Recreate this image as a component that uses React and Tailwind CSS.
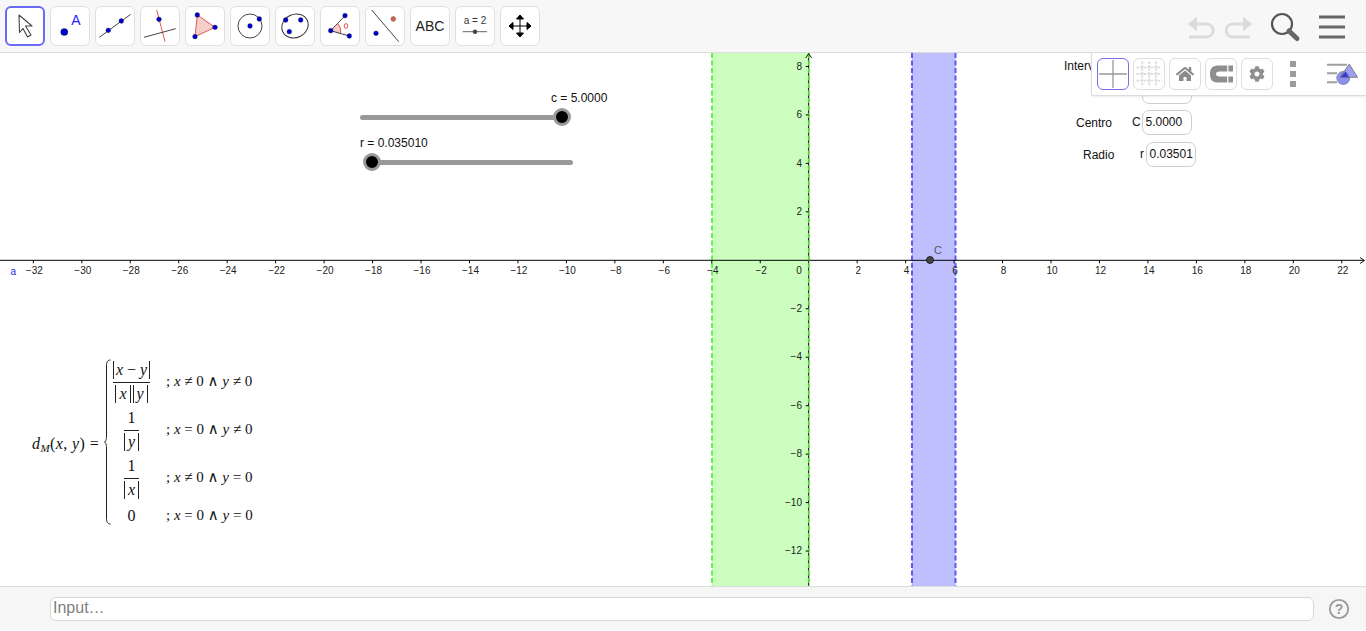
import React from "react";
import { FaHome, FaCog } from "react-icons/fa";

const BLUE = "#0000cc";
const Pt = ({ x, y, r = 2.4, c = BLUE }) => <circle cx={x} cy={y} r={r} fill={c} stroke="#222" strokeWidth="0.3" />;
const L = ({ a, b, c = "#444", w = 1 }) => <line x1={a[0]} y1={a[1]} x2={b[0]} y2={b[1]} stroke={c} strokeWidth={w} />;

const toolIcons = [
  <path key="0" d="M14 9 L27 20 L20.5 20 L26 29 L22.5 31 L18 22.5 L14.5 26.5 Z" fill="#fff" stroke="#444" strokeWidth="1.1" strokeLinejoin="round" />,
  <g key="1">
    <circle cx="14.3" cy="26" r="3.6" fill={BLUE} stroke="#111" strokeWidth="0.3" />
    <text x="26" y="19" textAnchor="middle" fontSize="14" fill="#2222ff">A</text>
  </g>,
  <g key="2"><L a={[4.3, 31.3]} b={[35.7, 8.3]} /><Pt x={13.3} y={24.3} /><Pt x={26.3} y={15} /></g>,
  <g key="3"><L a={[16.7, 4]} b={[25, 35.7]} c="#e8574f" /><L a={[4, 31.3]} b={[35.7, 22.7]} /><Pt x={19} y={13.3} /></g>,
  <g key="4">
    <polygon points="12.3,9 30,21.3 10,30.7" fill="#f5cfca" stroke="#dd5a50" strokeWidth="1" />
    <Pt x={12.3} y={9} /><Pt x={30} y={21.3} /><Pt x={10} y={30.7} />
  </g>,
  <g key="5"><circle cx="20" cy="20" r="12" fill="none" stroke="#444" strokeWidth="1" /><Pt x={20} y={20} /><Pt x={29.3} y={13} /></g>,
  <g key="6">
    <ellipse cx="20" cy="20" rx="13.5" ry="11.5" transform="rotate(-25 20 20)" fill="none" stroke="#333" strokeWidth="1" />
    <Pt x={10.7} y={14} /><Pt x={25.7} y={14} /><Pt x={14.3} y={25.7} />
  </g>,
  <g key="7">
    <path d="M10.7 24.7 L17.5 17.3 A11 11 0 0 1 20.5 27.7 Z" fill="#f5cfca" stroke="none" />
    <path d="M17.5 17.3 A11 11 0 0 1 20.5 27.7" fill="none" stroke="#dd5a50" strokeWidth="1" />
    <L a={[10.7, 24.7]} b={[25, 9.7]} /><L a={[10.7, 24.7]} b={[29.3, 30]} />
    <ellipse cx="26" cy="20" rx="1.8" ry="2.4" fill="none" stroke="#dd5a50" strokeWidth="1" />
    <Pt x={10.7} y={24.7} /><Pt x={25} y={9.7} /><Pt x={29.3} y={30} />
  </g>,
  <g key="8"><L a={[6.7, 4]} b={[33.7, 35.7]} /><Pt x={28.3} y={13} c="#d9604f" /><Pt x={11} y={27.3} /></g>,
  <text key="9" x="20" y="25" textAnchor="middle" fontSize="14" fill="#222">ABC</text>,
  <g key="10">
    <text x="20" y="18" textAnchor="middle" fontSize="10" fill="#333">a = 2</text>
    <L a={[7.7, 25.7]} b={[32, 25.7]} c="#666" w="1" />
    <circle cx="20" cy="25.7" r="2.2" fill="#444" />
  </g>,
  <g key="11" stroke="#000" fill="#000">
    <L a={[11, 20]} b={[29, 20]} c="#000" w="1" /><L a={[20, 11]} b={[20, 29]} c="#000" w="1" />
    <polygon points="20,9 16.5,13 23.5,13" /><polygon points="20,31 16.5,27 23.5,27" />
    <polygon points="9,20 13,16.5 13,23.5" /><polygon points="31,20 27,16.5 27,23.5" />
  </g>,
];

const xTicks = [];
for (let v = -32; v <= 22; v += 2) xTicks.push(v);
const yTicks = [];
for (let v = 8; v >= -12; v -= 2) if (v !== 0) yTicks.push(v);
const X0 = 808.7, Y0 = 260.3, U = 24.23;
const fmt = (v) => (v < 0 ? "\u2212" + -v : "" + v);

const Graph = () => (
  <svg className="absolute inset-0" width="1366" height="533" viewBox="0 53 1366 533">
    <rect x="712" y="53" width="96.7" height="533" fill="#ccffbf" />
    <rect x="912" y="53" width="43.5" height="533" fill="#bfbfff" />
    <line x1="712" y1="53" x2="712" y2="586" stroke="#66ee55" strokeWidth="2" strokeDasharray="5 2.5" />
    <line x1="912" y1="53" x2="912" y2="586" stroke="#5a5af5" strokeWidth="2" strokeDasharray="5 2.5" />
    <line x1="955.5" y1="53" x2="955.5" y2="586" stroke="#5a5af5" strokeWidth="2" strokeDasharray="5 2.5" />
    <line x1="0" y1={Y0} x2="1364" y2={Y0} stroke="#000" strokeWidth="1" />
    <line x1={X0} y1="54" x2={X0} y2="586" stroke="#000" strokeWidth="1" />
    <line x1={X0} y1="53" x2={X0} y2="586" stroke="#44dd22" strokeWidth="1.6" strokeDasharray="5 2.5" />
    <path d="M1360 257.5 L1364.5 260.5 L1360 263.5 M805.7 58 L808.7 53.5 L811.7 58" fill="none" stroke="#000" strokeWidth="0.9" />
    {xTicks.map((v) => {
      const x = X0 + v * U;
      return (
        <g key={v}>
          {v !== 0 && <line x1={x} y1={Y0} x2={x} y2={Y0 + 3} stroke="#000" strokeWidth="1" />}
          <text x={v === 0 ? 799 : x + 1} y="274" textAnchor="middle" fontSize="10" fill="#222">{fmt(v)}</text>
        </g>
      );
    })}
    {yTicks.map((v) => {
      const y = Y0 - v * U;
      return (
        <g key={v}>
          <line x1={X0 - 3} y1={y} x2={X0} y2={y} stroke="#000" strokeWidth="1" />
          <text x="802" y={y + 3.2} textAnchor="end" fontSize="10" fill="#222">{fmt(v)}</text>
        </g>
      );
    })}
    <text x="10.5" y="275" fontSize="10" fill="#2222dd">a</text>
    <circle cx="930" cy="260" r="3.5" fill="#444" stroke="#111" strokeWidth="0.8" />
    <text x="934" y="254" fontSize="11" fill="#555">C</text>
  </svg>
);

const Slider = ({ left, top, width, knob, label, labelLeft, labelTop }) => (
  <>
    <div className="absolute text-[12px] leading-[14px] text-[#111]" style={{ left: labelLeft, top: labelTop }}>{label}</div>
    <div className="absolute h-[5px] rounded-full bg-[#999999]" style={{ left, top, width }} />
    <div
      className="absolute h-[18px] w-[18px] rounded-full bg-black border-[3px] border-[#999999]"
      style={{ left: knob - 9, top: top - 6.5 }}
    />
  </>
);

const Field = ({ left, top, value, label, labelLeft, name, nameLeft, height = 25 }) => (
  <>
    {label && <div className="absolute text-[12px] leading-[14px] text-[#111]" style={{ left: labelLeft, top: top + 6 }}>{label}</div>}
    {name && <div className="absolute text-[12px] leading-[14px] text-[#111]" style={{ left: nameLeft, top: top + 5 }}>{name}</div>}
    <div
      className="absolute w-[50px] rounded-[7px] border border-[#cfcfcf] bg-white pl-[2.5px] text-[12px] leading-[23px] text-[#111]"
      style={{ left, top, height }}
    >
      {value}
    </div>
  </>
);

const V = ({ children }) => <i>{children}</i>;
const And = () => <span className="font-['DejaVu_Sans',sans-serif] text-[15px] font-normal leading-none">∧</span>;
const Bar = ({ children, gap = "" }) => (
  <span className={"inline-block h-[18px] border-x border-[#222] px-[1.5px] align-middle leading-[18px] " + gap}>{children}</span>
);
const Frac = ({ top, bottom }) => (
  <div className="flex flex-col items-center">
    <div className="flex h-[23px] items-center">{top}</div>
    <div className="flex h-[24px] min-w-[15px] items-center justify-center self-stretch border-t border-[#222]">{bottom}</div>
  </div>
);
const Row = ({ h, left, right }) => (
  <div className="flex items-center" style={{ height: h }}>
    <div className="flex w-[39px] justify-center">{left}</div>
    <div className="mb-[2px] ml-[15px] whitespace-nowrap text-[15px]">{right}</div>
  </div>
);

const Formula = () => (
  <div className="absolute left-[32px] top-[305px] flex h-[172px] items-center font-['Liberation_Serif',serif] text-[16px] text-[#111]">
    <div className="w-[72px] whitespace-nowrap tracking-[0.4px]">
      <V>d</V><sub className="text-[11px]"><V>M</V></sub>(<V>x</V>, <V>y</V>) =
    </div>
    <svg className="mr-[1px] mt-[1px] shrink-0 self-start" width="7" height="166" viewBox="0 0 7 166">
      <path d="M6.5 1 C3.5 1 2.5 3 2.5 7 L2.5 77 C2.5 81 1.5 83 0.5 83 C1.5 83 2.5 85 2.5 89 L2.5 159 C2.5 163 3.5 165 6.5 165" fill="none" stroke="#222" strokeWidth="1" />
    </svg>
    <div className="flex flex-col">
      <Row h={48} left={<Frac top={<Bar><V>x</V> − <V>y</V></Bar>} bottom={<><Bar gap="mr-[2px] px-[3px]"><V>x</V></Bar><Bar gap="px-[3px]"><V>y</V></Bar></>} />} right={<>; <V>x</V> ≠ 0 <And /> <V>y</V> ≠ 0</>} />
      <Row h={48} left={<Frac top="1" bottom={<Bar gap="px-[3px]"><V>y</V></Bar>} />} right={<>; <V>x</V> = 0 <And /> <V>y</V> ≠ 0</>} />
      <Row h={48} left={<Frac top="1" bottom={<Bar gap="px-[3px]"><V>x</V></Bar>} />} right={<>; <V>x</V> ≠ 0 <And /> <V>y</V> = 0</>} />
      <Row h={28} left="0" right={<>; <V>x</V> = 0 <And /> <V>y</V> = 0</>} />
    </div>
  </div>
);

const panelBtn = "flex h-8 w-8 items-center justify-center rounded-[6px] border border-[#dedede] bg-white";

const StylePanel = () => (
  <div className="absolute right-0 top-0 flex h-[43px] w-[275px] items-start gap-1 rounded-bl-[3px] border-b border-l border-[#dcdcdc] bg-white pl-[5px] pt-[5px] shadow-[0_1px_2px_rgba(0,0,0,0.08)]">
    <div className="flex h-8 w-8 items-center justify-center rounded-[6px] border border-[#7a70e0] bg-white">
      <svg width="30" height="30" viewBox="0 0 30 30"><path d="M15 1 V29 M1 15 H29" stroke="#999" strokeWidth="1.3" /></svg>
    </div>
    <div className={panelBtn}>
      <svg width="28" height="28" viewBox="0 0 28 28">
        <path d="M7.3 1.5 V26.5 M14.3 1.5 V26.5 M21 1.5 V26.5 M1.5 7.3 H26.5 M1.5 14 H26.5 M1.5 20.7 H26.5" stroke="#dcdcdc" strokeWidth="1.8" strokeDasharray="2.5 1" />
      </svg>
    </div>
    <div className={panelBtn}><FaHome size={18} color="#8a8a8a" /></div>
    <div className={panelBtn}>
      <svg width="26" height="18" viewBox="0 0 26 18">
        <path d="M25 0.5 H10 C4 0.5 2 4 2 9 C2 14 4 17.5 10 17.5 H25 V11.5 H12 C9 11.5 8 10.5 8 9 C8 7.5 9 6.5 12 6.5 H25 Z" fill="#8f8f8f" />
        <rect x="19" y="0" width="1.5" height="7" fill="#fff" fillOpacity="0.8" />
        <rect x="19" y="11" width="1.5" height="7" fill="#fff" fillOpacity="0.8" />
      </svg>
    </div>
    <div className={panelBtn}><FaCog size={16} color="#8f8f8f" /></div>
    <div className="ml-[13px] flex h-8 flex-col items-center justify-between py-[3px]">
      <div className="h-[6px] w-[6px] bg-[#9c9c9c]" /><div className="h-[6px] w-[6px] bg-[#9c9c9c]" /><div className="h-[6px] w-[6px] bg-[#9c9c9c]" />
    </div>
    <svg className="ml-[26px] mt-[4px]" width="33" height="26" viewBox="0 0 33 26">
      <path d="M1 2.7 H21 M1 11.3 H11 M1 20.3 H11" stroke="#a0a0a0" strokeWidth="2" />
      <circle cx="17.3" cy="16" r="6.5" fill="#8f8ff0" stroke="#7a7aa8" strokeWidth="0.8" />
      <polygon points="23.3,2 31.5,15.3 14,15.3" fill="#8f8ff0" fillOpacity="0.85" stroke="#777" strokeWidth="0.9" />
      <polygon points="19.6,9.5 23,15.3 14.5,15.3" fill="#3c3cc8" />
    </svg>
  </div>
);

export default function App() {
  return (
    <div className="flex h-[631px] w-[1366px] flex-col overflow-hidden bg-white font-['Liberation_Sans',Arial,sans-serif]">
      <header className="flex h-[53px] shrink-0 items-start border-b border-[#dcdcdc] bg-[#f7f7f7] pl-[5px] pt-[6px]">
        <div className="flex gap-[5px]">
          {toolIcons.map((icon, i) => (
            <button
              key={i}
              className={
                "h-10 w-10 rounded-[6px] bg-white " +
                (i === 0 ? "border-2 border-[#6b6bf5]" : "border border-[#e0e0e0]")
              }
            >
              <svg className={i === 0 ? "-m-[2px]" : "-m-[1px]"} width="40" height="40" viewBox="0 0 40 40">{icon}</svg>
            </button>
          ))}
        </div>
        <div className="ml-auto flex items-start">
          <svg width="180" height="46" viewBox="1186 0 180 46" className="-mt-[6px]">
            <g fill="none" stroke="#dcdcdc" strokeWidth="3">
              <path d="M1191 24 H1206 C1215.500 24 1215.500 37 1206 37 H1189" />
              <path d="M1249 24 H1233 C1224 24 1224 37 1233 37 H1250" />
            </g>
            <polygon points="1188,24 1197,16.500 1197,31.500" fill="#dcdcdc" />
            <polygon points="1252,24 1243,16.500 1243,31.500" fill="#dcdcdc" />
            <circle cx="1282" cy="24" r="10" fill="none" stroke="#555" strokeWidth="2.2" />
            <line x1="1289" y1="31" x2="1297" y2="38.500" stroke="#666" strokeWidth="5" strokeLinecap="round" />
            <rect x="1319" y="15.500" width="26" height="3" fill="#666" />
            <rect x="1319" y="25.500" width="26" height="3" fill="#666" />
            <rect x="1319" y="35.500" width="26" height="3" fill="#666" />
          </svg>
        </div>
      </header>

      <main className="relative h-[533px] shrink-0 overflow-hidden bg-white">
        <Graph />
        <Slider left={360} top={61.5} width={203} knob={562} label="c = 5.0000" labelLeft={551} labelTop={38} />
        <Slider left={371} top={106.5} width={202} knob={372} label="r = 0.035010" labelLeft={360} labelTop={83} />
        <Formula />

        <div className="absolute left-[1064px] top-[6px] text-[12px] leading-[14px] text-[#111]">Intervalo</div>
        <Field left={1142} top={25} height={26} value="" name="z" nameLeft={1134} />
        <Field left={1142} top={57} value="5.0000" label="Centro" labelLeft={1076} name="C" nameLeft={1132} />
        <Field left={1146} top={89} value="0.03501" label="Radio" labelLeft={1083} name="r" nameLeft={1140} />
        <StylePanel />
      </main>

      <footer className="flex h-[44px] shrink-0 items-center border-t border-[#dcdcdc] bg-[#f6f6f6] pl-[50px]">
        <div className="h-[24px] w-[1264px] rounded-[6px] border border-[#d8d8d8] bg-white pl-[2px] text-[16px] leading-[20px] text-[#808080]">
          Input…
        </div>
        <svg className="ml-[14px]" width="22" height="22" viewBox="0 0 22 22">
          <circle cx="11" cy="11" r="9.2" fill="none" stroke="#999" strokeWidth="1.8" />
          <text x="11" y="16" textAnchor="middle" fontSize="14" fontWeight="700" fill="#999">?</text>
        </svg>
      </footer>
    </div>
  );
}
